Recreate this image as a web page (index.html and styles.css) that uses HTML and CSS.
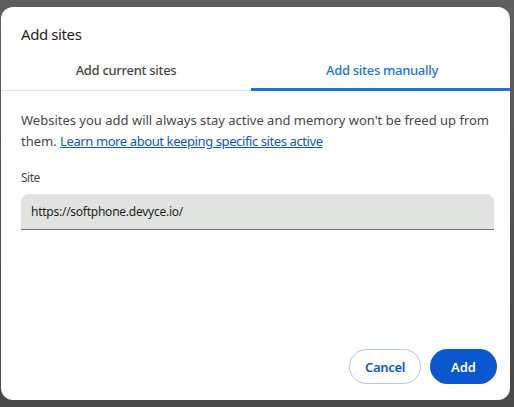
FILE: index.html
```html
<!DOCTYPE html>
<html lang="en">
<head>
  <meta charset="UTF-8" />
  <title>Add sites</title>
  <link rel="stylesheet" href="styles.css">
</head>
<body>
  <div class="dialog">
    <h2 class="dialog-title">Add sites</h2>

    <div class="tabs">
      <div class="tab">Add current sites</div>
      <div class="tab active">Add sites manually</div>
    </div>

    <div class="dialog-body">
      <p class="note">
        Websites you add will always stay active and memory won't be freed up from
        them. <a href="#">Learn more about keeping specific sites active</a>
      </p>

      <label class="field-label" for="site">Site</label>
      <input class="field" id="site" type="text" value="https://softphone.devyce.io/">
    </div>

    <div class="actions">
      <button class="btn btn-outline">Cancel</button>
      <button class="btn btn-primary">Add</button>
    </div>
  </div>
</body>
</html>
```

FILE: styles.css
```css
body {
  margin: 0;
  height: 407px;
  background: linear-gradient(#5f5f5f, #474747);
  font-family: "Noto Sans", "Open Sans", sans-serif;
  overflow: hidden;
}

.dialog {
  box-sizing: border-box;
  width: 509px;
  height: 393px;
  margin: 7px 0 0 1px;
  background-color: #fff;
  border-radius: 12px;
  display: flex;
  flex-direction: column;
}

.dialog-title {
  margin: 17px 0 0 20px;
  font-size: 15px;
  line-height: 20px;
  font-weight: 400;
  letter-spacing: -0.4px;
  color: #1f1f1f;
}

.tabs {
  display: flex;
  margin-top: 6px;
  border-bottom: 1px solid #e3e3e3;
}

.tab {
  flex: 0 0 250px;
  height: 40px;
  display: flex;
  align-items: center;
  justify-content: center;
  font-size: 13px;
  font-weight: 500;
  letter-spacing: -0.3px;
  color: #474747;
  position: relative;
}

.tab.active {
  flex: 1;
  padding-left: 3px;
  color: #1a73e8;
}

.tab.active::after {
  content: "";
  position: absolute;
  left: 0;
  right: 0;
  bottom: -1px;
  height: 3px;
  background-color: #1a73e8;
}

.dialog-body {
  padding: 0 16px 0 20px;
}

.note {
  margin: 19px 0 0;
  font-size: 13px;
  line-height: 21px;
  color: #474747;
}

.note a {
  color: #0b57d0;
  letter-spacing: -0.4px;
}

.field-label {
  display: block;
  margin-top: 18px;
  font-size: 12px;
  line-height: 16px;
  letter-spacing: -0.5px;
  color: #474747;
}

.field {
  display: block;
  box-sizing: border-box;
  width: 100%;
  height: 36px;
  margin-top: 8px;
  padding: 0 10px;
  border: none;
  border-bottom: 1px solid #747775;
  border-radius: 8px 8px 0 0;
  background-color: #e1e3e1;
  font-family: inherit;
  font-size: 12px;
  letter-spacing: -0.25px;
  color: #1f1f1f;
  outline: none;
}

.actions {
  margin-top: auto;
  display: flex;
  justify-content: flex-end;
  gap: 9px;
  padding: 0 13px 16px 0;
}

.btn {
  height: 35px;
  border-radius: 18px;
  font-family: inherit;
  font-size: 13px;
  font-weight: 600;
  cursor: pointer;
}

.btn-outline {
  width: 72px;
  background-color: #fff;
  border: 1px solid #a8c7fa;
  color: #0b57d0;
  letter-spacing: -0.3px;
}

.btn-primary {
  width: 67px;
  background-color: #0b57d0;
  border: none;
  color: #fff;
}
```
